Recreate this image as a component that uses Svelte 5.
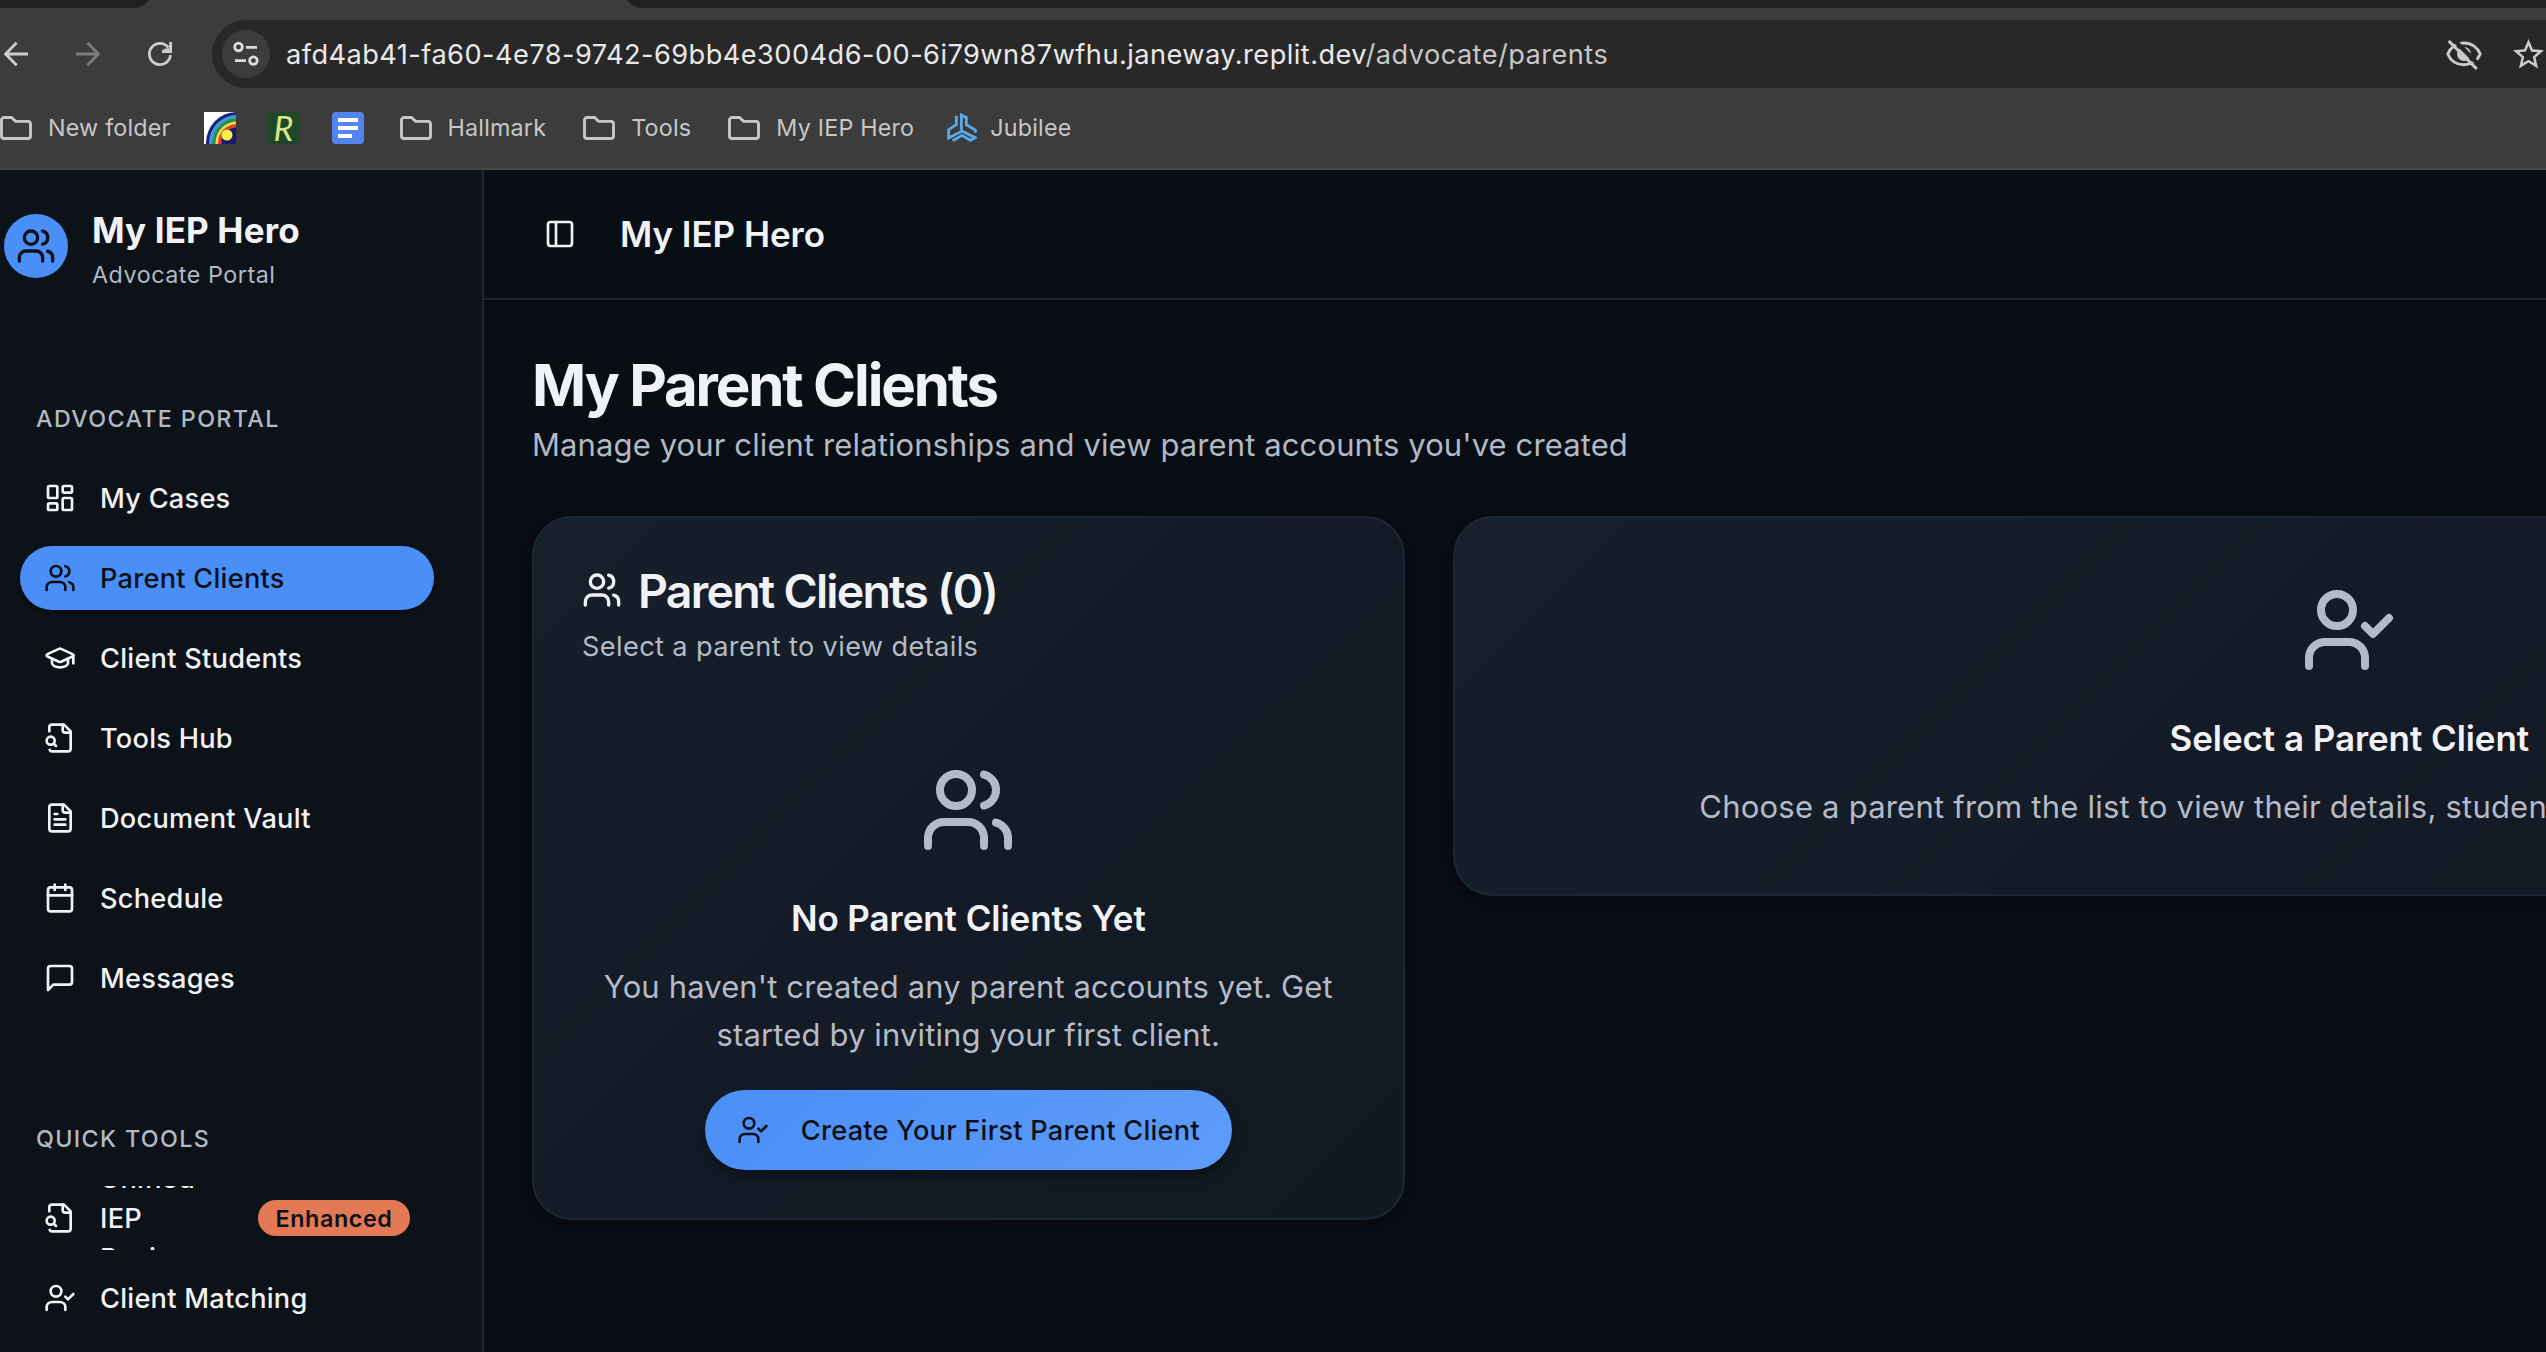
<script>
  const icons = {
    users:
      '<path d="M16 21v-2a4 4 0 0 0-4-4H6a4 4 0 0 0-4 4v2"/><circle cx="9" cy="7" r="4"/><path d="M22 21v-2a4 4 0 0 0-3-3.87"/><path d="M16 3.13a4 4 0 0 1 0 7.75"/>',
    userCheck:
      '<path d="m16 11 2 2 4-4"/><path d="M16 21v-2a4 4 0 0 0-4-4H6a4 4 0 0 0-4 4v2"/><circle cx="9" cy="7" r="4"/>',
    dashboard:
      '<rect width="7" height="9" x="3" y="3" rx="1"/><rect width="7" height="5" x="14" y="3" rx="1"/><rect width="7" height="9" x="14" y="12" rx="1"/><rect width="7" height="5" x="3" y="16" rx="1"/>',
    cap:
      '<path d="M21.42 10.922a1 1 0 0 0-.019-1.838L12.83 5.18a2 2 0 0 0-1.66 0L2.6 9.08a1 1 0 0 0 0 1.832l8.57 3.908a2 2 0 0 0 1.66 0z"/><path d="M22 10v6"/><path d="M6 12.5V16a6 3 0 0 0 12 0v-3.5"/>',
    fileSearch:
      '<path d="M14 2v4a2 2 0 0 0 2 2h4"/><path d="M4.268 21a2 2 0 0 0 1.727 1H18a2 2 0 0 0 2-2V7l-5-5H6a2 2 0 0 0-2 2v3"/><path d="m9 18-1.5-1.5"/><circle cx="5" cy="14" r="3"/>',
    fileText:
      '<path d="M15 2H6a2 2 0 0 0-2 2v16a2 2 0 0 0 2 2h12a2 2 0 0 0 2-2V7Z"/><path d="M14 2v4a2 2 0 0 0 2 2h4"/><path d="M10 9H8"/><path d="M16 13H8"/><path d="M16 17H8"/>',
    calendar:
      '<path d="M8 2v4"/><path d="M16 2v4"/><rect width="18" height="18" x="3" y="4" rx="2"/><path d="M3 10h18"/>',
    message: '<path d="M21 15a2 2 0 0 1-2 2H7l-4 4V5a2 2 0 0 1 2-2h14a2 2 0 0 1 2 2z"/>',
    panel: '<rect width="18" height="18" x="3" y="3" rx="2"/><path d="M9 3v18"/>'
  };

  const portalItems = [
    { label: 'My Cases', icon: 'dashboard' },
    { label: 'Parent Clients', icon: 'users', active: true },
    { label: 'Client Students', icon: 'cap' },
    { label: 'Tools Hub', icon: 'fileSearch' },
    { label: 'Document Vault', icon: 'fileText' },
    { label: 'Schedule', icon: 'calendar' },
    { label: 'Messages', icon: 'message' }
  ];
  const quickItems = [
    { label: 'Unified IEP Review', icon: 'fileSearch', badge: 'Enhanced' },
    { label: 'Client Matching', icon: 'userCheck' }
  ];
</script>

{#snippet icon(name, size)}
  <svg class="icon" width={size} height={size} viewBox="0 0 24 24">{@html icons[name]}</svg>
{/snippet}

{#snippet folder(label)}
  <span class="bookmark folder">
    <svg width="32" height="24" viewBox="0 0 32 24" fill="none" stroke="#c7c7c7" stroke-width="2.9">
      <path d="M4 1.5h7.6l4 3.9H28a2.5 2.5 0 0 1 2.5 2.5V20a2.5 2.5 0 0 1-2.5 2.5H4A2.5 2.5 0 0 1 1.5 20V4A2.5 2.5 0 0 1 4 1.5z" />
    </svg>
    <span class="bookmark-label">{label}</span>
  </span>
{/snippet}

{#snippet menu(title, items)}
  <section class="group">
    <h3 class="group-title">{title}</h3>
    <ul class="menu">
      {#each items as item}
        <li class="item" class:active={item.active}>
          {@render icon(item.icon, 32)}
          <span class="item-label" class:narrow={item.badge}>{item.label}</span>
          {#if item.badge}<span class="badge">{item.badge}</span>{/if}
        </li>
      {/each}
    </ul>
  </section>
{/snippet}

<div class="window">
  <div class="browser">
    <div class="tabs">
      <div class="tab tab-left"></div>
      <div class="tab tab-right"></div>
    </div>

    <div class="toolbar">
      <div class="nav-buttons">
        <svg width="32" height="32" viewBox="0 0 32 32" fill="none" stroke="#cdcdcd" stroke-width="2.8">
          <path d="M28 16H6M16.6 4.8 5.6 16l11 11.2" />
        </svg>
        <svg width="32" height="32" viewBox="0 0 32 32" fill="none" stroke="#7c7c7c" stroke-width="2.8">
          <path d="M4 16h22M15.4 4.8 26.4 16l-11 11.2" />
        </svg>
        <svg width="32" height="32" viewBox="0 0 32 32" fill="none" stroke="#cdcdcd" stroke-width="2.8">
          <path d="M26.5 17.2A10.6 10.6 0 1 1 24.4 9.6" />
          <path d="M26.6 4v9.6H18M19.5 12.6l5.5-1.2" />
        </svg>
      </div>
      <div class="omnibox">
        <span class="site-info">
          <svg width="28" height="28" viewBox="0 0 28 28" fill="none" stroke="#dcdcdc" stroke-width="2.8">
            <circle cx="6.5" cy="7" r="3.8" />
            <path d="M14 7.3h11M3 20.7h11" />
            <circle cx="21.4" cy="20.6" r="3.8" />
          </svg>
        </span>
        <span class="url"><span class="host">afd4ab41-fa60-4e78-9742-69bb4e3004d6-00-6i79wn87wfhu.janeway.replit.dev</span>/advocate/parents</span>
        <svg class="eye" width="36" height="32" viewBox="0 0 36 32" fill="none" stroke-width="3">
          <path stroke="#c9c9c9" d="M1.8 15C4.6 8.2 10.8 4 18 4s13.4 4.2 16.2 11C31.4 21.8 25.2 25.7 18 25.7S4.6 21.8 1.8 15z" />
          <circle cx="18" cy="15" r="7" fill="#c9c9c9" />
          <path stroke="#282828" stroke-width="3" d="M16.5 11.3a4.5 4.5 0 0 1 5.2 5.2" />
          <path stroke="#282828" stroke-width="4.5" d="M4 -3.2 35 28" />
          <path stroke="#c9c9c9" d="M2.6 1.9 30.8 30" />
        </svg>
        <svg class="star" width="37" height="37" viewBox="0 0 24 24" fill="#cdcdcd">
          <path d="M22 9.24l-7.19-.62L12 2 9.19 8.63 2 9.24l5.46 4.73L5.82 21 12 17.27 18.18 21l-1.63-7.03L22 9.24zM12 15.4l-3.76 2.27 1-4.28-3.32-2.88 4.38-.38L12 6.1l1.71 4.04 4.38.38-3.32 2.88 1 4.28L12 15.4z" />
        </svg>
      </div>
    </div>

    <div class="bookmarks">
      {@render folder('New folder')}
      <svg class="favicon" width="32" height="32" viewBox="0 0 32 32">
        <rect width="32" height="32" fill="#fff" />
        <circle cx="33" cy="31" r="31" fill="#1c1f86" />
        <circle cx="33" cy="31" r="28" fill="#3aa0cf" />
        <circle cx="33" cy="31" r="24.5" fill="#2f8a4c" />
        <circle cx="33" cy="31" r="21.5" fill="#e9e04a" />
        <circle cx="33" cy="31" r="19" fill="#e0402a" />
        <circle cx="33" cy="31" r="15.5" fill="#1b1a6e" />
        <circle cx="23" cy="23" r="5.5" fill="#f6f04a" />
      </svg>
      <span class="favicon monogram">R</span>
      <svg class="favicon" width="32" height="32" viewBox="0 0 32 32">
        <rect width="32" height="32" rx="4" fill="#5484ed" />
        <path d="M6 6h20v4H6zM6 14h20v4H6zM6 22h14v4H6z" fill="#fff" />
      </svg>
      {@render folder('Hallmark')}
      {@render folder('Tools')}
      {@render folder('My IEP Hero')}
      <span class="bookmark jubilee">
        <svg width="30" height="30" viewBox="52 52 90 90" fill="none" stroke="#5aa9e6" stroke-width="8.5">
          <path d="M80 60V87L57 102V127L97 106L136 126L122 134L97 119L69 135" />
          <path d="M95 104V58L110 66V87L137 103V111" />
        </svg>
        <span class="bookmark-label">Jubilee</span>
      </span>
    </div>
  </div>

  <div class="app">
    <aside class="sidebar">
      <div class="brand">
        <span class="brand-mark">{@render icon('users', 40)}</span>
        <div>
          <div class="brand-name">My IEP Hero</div>
          <div class="brand-sub">Advocate Portal</div>
        </div>
      </div>
      {@render menu('ADVOCATE PORTAL', portalItems)}
      {@render menu('QUICK TOOLS', quickItems)}
    </aside>

    <main class="main">
      <header class="header">
        {@render icon('panel', 32)}
        <span class="header-title">My IEP Hero</span>
      </header>

      <div class="content">
        <h1>My Parent Clients</h1>
        <p class="lead">Manage your client relationships and view parent accounts you've created</p>

        <div class="cards">
          <section class="card list-card">
            <h2 class="card-title">{@render icon('users', 40)}<span>Parent Clients (0)</span></h2>
            <p class="card-sub">Select a parent to view details</p>
            <div class="empty">
              {@render icon('users', 96)}
              <h3>No Parent Clients Yet</h3>
              <p>You haven't created any parent accounts yet. Get<br />started by inviting your first client.</p>
              <button>{@render icon('userCheck', 32)}Create Your First Parent Client</button>
            </div>
          </section>

          <section class="card detail-card">
            <div class="empty">
              {@render icon('userCheck', 96)}
              <h3>Select a Parent Client</h3>
              <p class="hint">Choose a parent from the list to view their details, students, and communication history.</p>
            </div>
          </section>
        </div>
      </div>
    </main>
  </div>
</div>

<style>
  :global(body) {
    background: #090d14;
  }
  .window {
    width: 2546px;
    height: 1352px;
    overflow: hidden;
    display: flex;
    flex-direction: column;
    font-family: Inter, 'Liberation Sans', sans-serif;
    color: #f1f2f6;
  }
  h1, h2, h3, p, ul {
    margin: 0;
    padding: 0;
    font-weight: 430;
  }
  svg {
    flex: none;
    display: block;
  }
  .icon {
    fill: none;
    stroke: currentColor;
    stroke-width: 2;
    stroke-linecap: round;
    stroke-linejoin: round;
  }

  /* Browser chrome */
  .browser {
    flex: none;
    height: 168px;
    background: #3c3c3c;
    border-bottom: 2px solid #434847;
  }
  .tabs {
    height: 8px;
    overflow: hidden;
    display: flex;
    align-items: flex-end;
    justify-content: space-between;
  }
  .tab {
    height: 40px;
    background: #1f2120;
  }
  .tab-left {
    width: 153px;
    border-bottom-right-radius: 20px;
  }
  .tab-right {
    width: 1923px;
    border-bottom-left-radius: 20px;
  }
  .toolbar {
    display: flex;
    align-items: center;
    height: 68px;
    padding-top: 12px;
  }
  .nav-buttons {
    display: flex;
    gap: 40px;
    width: 212px;
  }
  .omnibox {
    flex: 1;
    display: flex;
    align-items: center;
    height: 68px;
    padding-left: 10px;
    background: #282828;
    border-radius: 34px 0 0 34px;
  }
  .site-info {
    display: grid;
    place-items: center;
    width: 48px;
    height: 48px;
    margin-right: 16px;
    border-radius: 50%;
    background: #3c3c3c;
  }
  .url {
    flex: 1;
    font-size: 27.2px;
    font-weight: 430;
    letter-spacing: 0.45px;
    color: #c7c7c7;
    white-space: nowrap;
  }
  .host {
    color: #e8e8e8;
  }
  .eye {
    margin: 2px 28px 0 0;
  }
  .star {
    margin-right: -1px;
  }
  .bookmarks {
    display: flex;
    align-items: center;
    height: 80px;
    font-size: 23.3px;
    letter-spacing: 0.2px;
    color: #c7c7c7;
  }
  .bookmark {
    display: flex;
    align-items: center;
    gap: 16px;
    margin-right: 37px;
    white-space: nowrap;
  }
  .bookmark-label {
    padding-bottom: 2px;
  }
  .bookmark:first-child {
    margin-right: 33px;
  }
  .jubilee {
    gap: 13px;
    margin-left: -4px;
  }
  .favicon {
    margin-right: 32px;
  }
  .favicon:has(+ .folder) {
    margin-right: 36px;
  }
  .monogram {
    display: grid;
    place-items: center;
    width: 32px;
    height: 32px;
    background: #1e4727;
    color: #d9e38a;
    font: italic 400 34px/32px Lato, sans-serif;
    letter-spacing: 0;
  }

  /* Sidebar */
  .app {
    flex: 1;
    min-height: 0;
    display: flex;
  }
  .sidebar {
    flex: none;
    box-sizing: border-box;
    width: 484px;
    overflow: hidden;
    padding-top: 32px;
    background: #0d1118;
    border-right: 2px solid #1c2637;
  }
  .brand {
    display: flex;
    align-items: center;
    gap: 24px;
    padding-left: 4px;
    margin-bottom: 112px;
  }
  .brand-mark {
    display: grid;
    place-items: center;
    width: 64px;
    height: 64px;
    border-radius: 50%;
    background: #4a8ff8;
    color: #0c1118;
  }
  .brand-name {
    font-size: 35px;
    line-height: 56px;
    font-weight: 700;
    letter-spacing: 0.14px;
  }
  .brand-sub {
    margin-bottom: -1px;
    padding-top: 1px;
    font-size: 23.3px;
    font-weight: 430;
    line-height: 32px;
    letter-spacing: 0.53px;
    color: #b0b9c4;
  }
  .group {
    margin-bottom: 112px;
  }
  .group-title {
    margin: 0 0 31px 36px;
    padding-top: 1px;
    font-size: 23.3px;
    line-height: 32px;
    font-weight: 520;
    letter-spacing: 1.36px;
    color: #b0b9c4;
  }
  .menu {
    display: flex;
    flex-direction: column;
    gap: 16px;
    margin: 0 48px 0 20px;
    list-style: none;
  }
  .item {
    display: flex;
    align-items: center;
    gap: 24px;
    box-sizing: border-box;
    height: 64px;
    padding: 0 24px;
    overflow: hidden;
    border-radius: 32px;
    font-size: 27.2px;
    line-height: 40px;
    font-weight: 450;
    letter-spacing: 0.25px;
  }
  .item:has(.badge) {
    border-radius: 0;
  }
  .item-label {
    padding-top: 2px;
  }
  .active {
    background: #4a8ff8;
    color: #0c1118;
    box-shadow: 0 2px 4px rgba(0, 0, 0, 0.4);
  }
  .narrow {
    width: 110px;
  }
  .badge {
    box-sizing: border-box;
    margin-left: auto;
    width: 152px;
    height: 36px;
    border-radius: 18px;
    background: #e37a55;
    color: #0c1118;
    font-size: 23.3px;
    line-height: 37px;
    font-weight: 600;
    letter-spacing: 0.6px;
    text-align: center;
  }

  /* Main column */
  .main {
    flex: 1;
    min-width: 0;
    overflow: hidden;
    background: #090d14;
  }
  .header {
    display: flex;
    align-items: center;
    gap: 44px;
    height: 128px;
    padding-left: 60px;
    border-bottom: 2px solid #1a2432;
  }
  .header-title {
    font-size: 35px;
    font-weight: 600;
    letter-spacing: -0.05px;
  }
  .content {
    width: 2714px;
    padding: 48px;
  }
  h1 {
    padding-top: 1px;
    font-size: 58.2px;
    line-height: 72px;
    font-weight: 700;
    letter-spacing: -2.15px;
  }
  .lead {
    font-size: 31px;
    line-height: 48px;
    letter-spacing: 0.107px;
    color: #b0b9c4;
  }
  .cards {
    display: grid;
    grid-template-columns: 872.67px 1793.33px;
    gap: 48px;
    align-items: start;
    margin-top: 47px;
  }
  .card {
    border: 2px solid #1b2735;
    border-radius: 40px;
    background: linear-gradient(135deg, #16202a 0%, #141b26 50%, #111922 100%);
    box-shadow: 0 4px 16px rgba(0, 0, 0, 0.3);
  }
  .list-card {
    padding: 48px;
  }
  .detail-card {
    padding: 64px 48px;
  }
  .card-title {
    display: flex;
    align-items: center;
    gap: 16px;
    height: 48px;
    font-size: 46.5px;
    line-height: 48px;
    font-weight: 600;
    letter-spacing: -1.77px;
  }
  .card-title span {
    padding-top: 2px;
  }
  .card-sub {
    margin: 12px 0 95px;
    padding-top: 1px;
    font-size: 27.2px;
    line-height: 40px;
    letter-spacing: 0.36px;
    color: #b4bac6;
  }
  .empty {
    display: flex;
    flex-direction: column;
    align-items: center;
    text-align: center;
    color: #b4bac6;
  }
  .empty h3 {
    margin: 32px 0 16px;
    font-size: 35px;
    line-height: 56px;
    font-weight: 600;
    letter-spacing: -0.07px;
    color: #f1f2f6;
  }
  .empty p {
    margin-bottom: -1px;
    padding-top: 1px;
    font-size: 31px;
    line-height: 48px;
    letter-spacing: 0.13px;
  }
  .empty .hint {
    width: 1300px;
    letter-spacing: 0.21px;
    text-align: left;
    white-space: nowrap;
  }
  button {
    display: flex;
    align-items: center;
    gap: 32px;
    height: 80px;
    margin-top: 32px;
    padding: 0 32px;
    border: 0;
    border-radius: 40px;
    background: linear-gradient(135deg, #4a8ff8, #5d9cf9);
    box-shadow: 0 6px 12px rgba(0, 0, 0, 0.35);
    color: #0c1118;
    font: 480 27.2px Inter, 'Liberation Sans', sans-serif;
    letter-spacing: 0.22px;
    white-space: nowrap;
  }
</style>
